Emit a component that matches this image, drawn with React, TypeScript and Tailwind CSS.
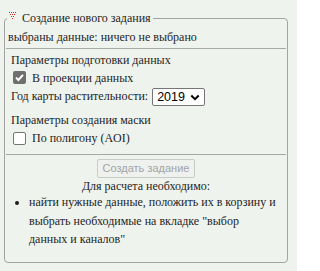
import React from "react";

function Dots() {
  const pts: [number, number][] = [
    [0, 0], [2, 0], [4, 0], [6, 0],
    [1, 2], [3, 2], [5, 2],
    [2, 4], [4, 4],
    [3, 6],
  ];
  return (
    <svg width="8" height="7" viewBox="0 0 8 7" className="block">
      {pts.map(([x, y], i) => (
        <rect key={i} x={x} y={y} width="1" height="1" fill="#d22" />
      ))}
    </svg>
  );
}

export default function App() {
  return (
    <div className="w-[297px] h-[271px] bg-[#eef3ee] pt-[9px] text-[#1e1e1e] [font-family:Liberation_Serif,serif]">
      <fieldset className="ml-[4px] w-[284px] h-[254px] border border-[#a3a3a3] rounded-[4px] px-[2px] py-0 text-[12px] leading-[18px] [font-family:Liberation_Serif,serif]">
        <legend className="px-[2px] flex items-center gap-[5px] h-[18px]">
          <span className="-mt-[5px]"><Dots /></span>
          <span>Создание нового задания</span>
        </legend>
        <div className="ml-[1px] mt-[1px]">выбраны данные: ничего не выбрано</div>
        <div className="mt-[2px] -mx-[1px] border-t border-[#a8a8a8]" />
        <div className="pl-[4px] pt-[2px]">
          <div>Параметры подготовки данных</div>
          <div className="flex items-start h-[18px]">
            <span className="mt-[2px] ml-[2px] w-[13px] h-[13px] rounded-[2px] bg-[#6f6f6f] flex items-center justify-center">
              <svg width="11" height="11" viewBox="0 0 11 11"><path d="M2 5.6 L4.4 8 L9 2.8" stroke="white" strokeWidth="2" fill="none" /></svg>
            </span>
            <span className="ml-[6px]">В проекции данных</span>
          </div>
          <div className="flex items-start h-[20px]">
            <span>Год карты растительности:</span>
            <div className="ml-[4px] mt-[1px] w-[53px] h-[18px] bg-white border border-[#767676] rounded-[2px] flex items-center pl-[4px] pr-[4px] text-[12.5px] leading-[16px] text-black [font-family:Liberation_Sans,Arial,sans-serif]">
              <span className="flex-1">2019</span>
              <svg width="10" height="7" viewBox="0 0 10 7"><path d="M1.3 1.5 L5 5.2 L8.7 1.5" stroke="black" strokeWidth="2" fill="none" /></svg>
            </div>
          </div>
          <div className="mt-[4px]">Параметры создания маски</div>
          <div className="flex items-start h-[18px]">
            <span className="mt-[3px] ml-[2px] w-[13px] h-[13px] rounded-[2px] bg-white border border-[#767676]" />
            <span className="ml-[6px]">По полигону (AOI)</span>
          </div>
        </div>
        <div className="mt-[7px] -mx-[1px] border-t border-[#a8a8a8]" />
        <div className="flex justify-center mt-[4px]">
          <span className="w-[98px] h-[19px] border border-[#c8ccc8] rounded-[2px] bg-[#eef1ee] text-[#a4a4a4] text-[11px] leading-[17px] whitespace-nowrap text-center [font-family:Liberation_Sans,Arial,sans-serif]">
            Создать задание
          </span>
        </div>
        <div className="text-center mt-[1px] leading-[14px]">Для расчета необходимо:</div>
        <ul className="list-disc pl-[22px] pr-[8px] leading-[18.5px]">
          <li>найти нужные данные, положить их в корзину и выбрать необходимые на вкладке "выбор данных и каналов"</li>
        </ul>
      </fieldset>
    </div>
  );
}
